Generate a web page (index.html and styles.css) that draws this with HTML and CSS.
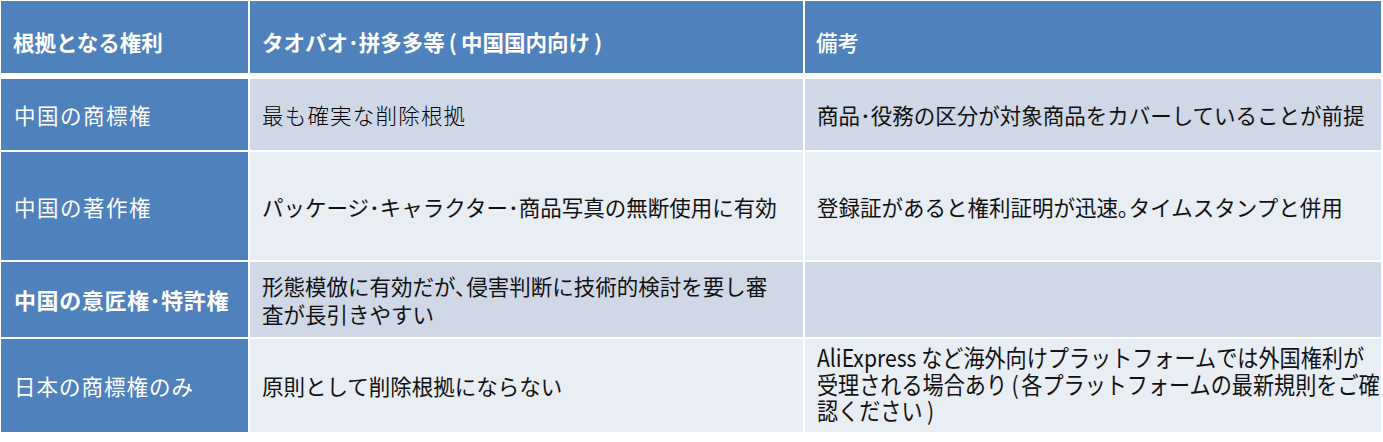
FILE: index.html
```html
<!DOCTYPE html>
<html lang="ja">
<head>
<meta charset="utf-8">
<title>根拠となる権利</title>
<link rel="stylesheet" href="styles.css">
</head>
<body>
<div class="table">
  <div class="cell head"><span class="bold">根拠となる権利</span></div>
  <div class="cell head"><span class="bold">タオバオ･拼多多等<span class="paren">(</span>中国国内向け<span class="paren">)</span></span></div>
  <div class="cell head last"><span class="med">備考</span></div>

  <div class="cell side spaced">中国の商標権</div>
  <div class="cell odd serif">最も確実な削除根拠</div>
  <div class="cell odd">商品･役務の区分が対象商品をカバーしていることが前提</div>

  <div class="cell side spaced">中国の著作権</div>
  <div class="cell even">パッケージ･キャラクター･商品写真の無断使用に有効</div>
  <div class="cell even">登録証があると権利証明が迅速｡タイムスタンプと併用</div>

  <div class="cell side bold spaced-b">中国の意匠権･特許権</div>
  <div class="cell odd two">形態模倣に有効だが､侵害判断に技術的検討を要し審<br>査が長引きやすい</div>
  <div class="cell odd"></div>

  <div class="cell side spaced-s">日本の商標権のみ</div>
  <div class="cell even">原則として削除根拠にならない</div>
  <div class="cell even narrowcell"><span class="narrow">AliExpress など海外向けプラットフォームでは外国権利が<br>受理される場合あり<span class="paren-s">(</span>各プラットフォームの最新規則をご確<br>認ください<span class="paren-s">)</span></span></div>
</div>
</body>
</html>
```

FILE: styles.css
```css
html, body {
  margin: 0;
  padding: 0;
  background: #ffffff;
}
body {
  font-family: "Noto Sans CJK JP", "Noto Sans", sans-serif;
  color: #111111;
}
.table {
  display: grid;
  grid-template-columns: 247px 553px 576px;
  grid-template-rows: 76px 71px 108px 75px 93px;
  column-gap: 2px;
  row-gap: 2px;
  padding: 1px 0 0 1px;
}
.cell {
  display: flex;
  align-items: center;
  padding: 0 8px 0 12px;
  font-size: 21.5px;
  line-height: 27px;
  white-space: nowrap;
  overflow: hidden;
}
.head {
  background: #4f81bd;
  color: #ffffff;
  margin-bottom: 4px;
  padding-top: 9px;
}
.head.last {
  padding-left: 11px;
}
.paren {
  display: inline-block;
  margin: 0 4px;
}
.paren-s {
  display: inline-block;
  margin: 0 3px 0 5px;
}
.side {
  background: #4f81bd;
  color: #ffffff;
  padding-left: 13px;
}
.odd {
  background: #d0d8e8;
}
.even {
  background: #e9edf4;
}
.bold {
  font-weight: 700;
}
.med {
  font-weight: 500;
}
.spaced {
  letter-spacing: 1.5px;
}
.spaced-s {
  letter-spacing: 1px;
}
.spaced-b {
  font-size: 22px;
  letter-spacing: 0.6px;
}
.serif {
  font-weight: 300;
  letter-spacing: 1.2px;
  color: #000000;
}
.two {
  line-height: 28px;
}
.narrowcell {
  align-items: flex-start;
  padding-top: 5px;
}
.narrow {
  display: inline-block;
  font-size: 24px;
  line-height: 26.5px;
  transform: scaleX(0.88);
  transform-origin: left top;
}
```
